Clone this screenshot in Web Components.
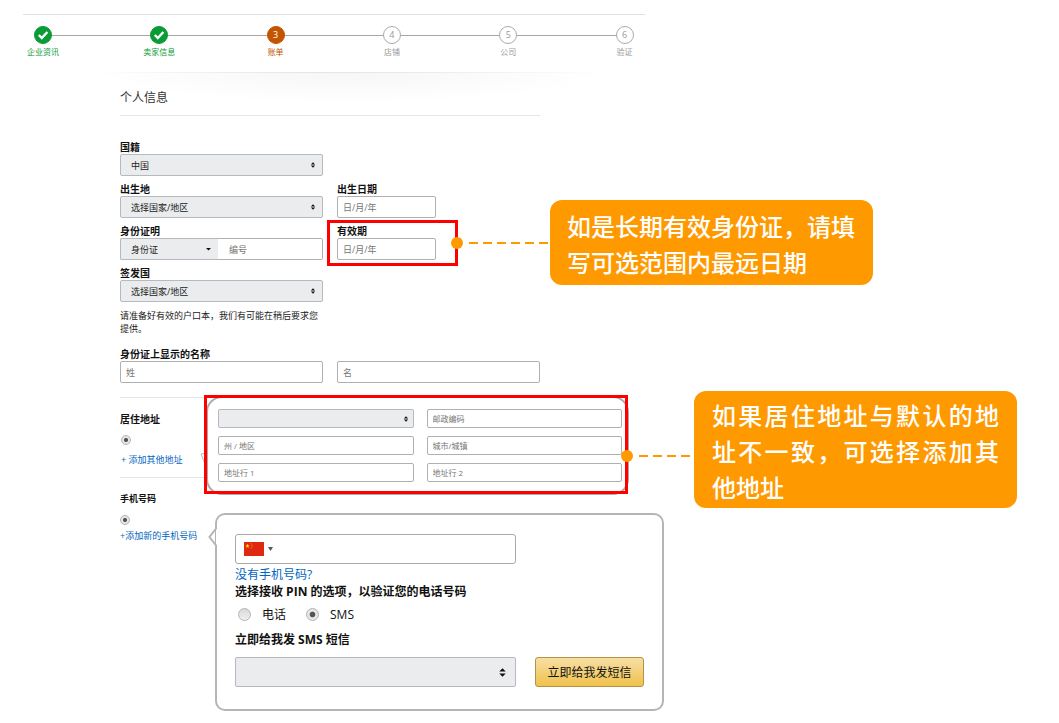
<!DOCTYPE html>
<html lang="zh-CN">
<head>
<meta charset="utf-8">
<meta name="viewport" content="width=device-width, initial-scale=1">
<title>个人信息</title>
<style>
  body { margin: 0; background: #fff; color: #111; font: 9px/13px "Open Sans", "Noto Sans CJK SC", sans-serif; }
</style>
</head>
<body>
<seller-page></seller-page>

<script>
const define = (name, render) => customElements.define(name, class extends HTMLElement {
  connectedCallback() {
    if (this.shadowRoot) return;
    const template = document.createElement('template');
    template.innerHTML = '<style>*{box-sizing:border-box}</style>' + render(this);
    this.attachShadow({ mode: 'open' }).append(template.content.cloneNode(true));
  }
});
const attr = (el, name) => el.getAttribute(name) || '';

/* Progress bar of the registration */
define('step-item', el => `
<style>
  :host { display: grid; justify-items: center; width: 40px; row-gap: 2px; font-size: 10px; line-height: 12px; color: #999; position: relative; }
  .dot { width: 18px; height: 18px; border: 1px solid #aaa; border-radius: 50%; background: #fff; display: grid; place-items: center; font-size: 9px; }
  .label { white-space: nowrap; font-size: 8px; }
  :host([state=done]) { color: #0a9b36; }
  :host([state=done]) .dot { background: #0a9b36; border-color: #0a9b36; }
  :host([state=current]) { color: #c45500; }
  :host([state=current]) .dot { background: #c45500; border-color: #c45500; color: #fff; }
</style>
<span class="dot">${attr(el, 'state') === 'done'
  ? '<svg width="12" height="12" viewBox="0 0 12 12" aria-label="完成"><path d="M1.8 6l3 3L10.4 3" fill="none" stroke="#fff" stroke-width="2.4"/></svg>'
  : attr(el, 'number')}</span>
<span class="label"><slot></slot></span>`);

define('step-bar', () => `
<style>
  :host { display: block; border-top: 1px solid #e0e0e0; padding: 11px 0 14px; }
  .track { display: flex; justify-content: space-between; position: relative; }
  .track::before { content: ""; position: absolute; left: 20px; right: 20px; top: 9px; height: 1px; background: #a6a6a6; }
</style>
<div class="track"><slot></slot></div>`);

define('text-field', el => `
<style>
  :host { display: block; min-width: 0; }
  label { display: block; height: 15px; font-size: 10px; line-height: 16px; font-weight: 700; white-space: nowrap; }
  input { display: block; width: 100%; height: var(--control-height, 22px); margin: 0; padding: 0 5px; border: 1px solid #b0b0b0; border-radius: 2px; background: #fff; font: inherit; color: #111; outline: 0; }
  input::placeholder { color: #767676; opacity: 1; }
  :host([joined]) input { border-left: 0; border-radius: 0 2px 2px 0; padding-left: 11px; }
</style>
${attr(el, 'label') ? `<label for="control">${attr(el, 'label')}</label>` : ''}
<input id="control" type="text" placeholder="${attr(el, 'placeholder')}" aria-label="${attr(el, 'label') || attr(el, 'placeholder')}">`);

define('select-field', el => {
  const size = attr(el, 'arrow') || '6';
  return `
<style>
  :host { display: block; min-width: 0; }
  label { display: block; height: 15px; font-size: 10px; line-height: 16px; font-weight: 700; white-space: nowrap; }
  .box { display: grid; align-items: center; }
  select, svg { grid-area: 1 / 1; }
  select { appearance: none; width: 100%; height: var(--control-height, 22px); margin: 0; padding: 0 20px 0 10px; border: 1px solid #b4bac0; border-radius: 2px; background: #ebecee; font: inherit; color: #222; outline: 0; }
  svg { justify-self: end; margin-right: var(--arrow-inset, 7px); pointer-events: none; }
  :host([joined]) select { border-right: 0; border-radius: 2px 0 0 2px; }
</style>
${attr(el, 'label') ? `<label for="control">${attr(el, 'label')}</label>` : ''}
<div class="box">
  <select id="control" aria-label="${attr(el, 'label') || attr(el, 'name')}"><option>${attr(el, 'value')}</option></select>
  ${el.hasAttribute('joined')
    ? '<svg width="5" height="4" viewBox="0 0 5 4"><path d="M0 1h5L2.500 3.500z" fill="#111"/></svg>'
    : `<svg width="${size}" height="${size}" viewBox="0 0 6 7"><path d="M.5 2.800L3 .2l2.500 2.600zM.5 4.200h5L3 6.800z" fill="#111"/></svg>`}
</div>`;
});

define('id-field', () => `
<style>
  :host { display: block; }
  .label { height: 15px; font-size: 10px; line-height: 16px; font-weight: 700; }
  .pair { display: grid; grid-template-columns: 98fr 105fr; }
</style>
<div class="label">身份证明</div>
<div class="pair" role="group" aria-label="身份证明">
  <select-field joined name="证件类型" value="身份证"></select-field>
  <text-field joined placeholder="编号"></text-field>
</div>`);

define('radio-option', el => `
<style>
  :host { display: block; }
  label { display: flex; align-items: center; gap: var(--radio-gap, 0); }
  input { appearance: none; flex: none; width: var(--radio-size, 10px); height: var(--radio-size, 10px); margin: 0; border: 1px solid #b4b4b4; border-radius: 50%; background: linear-gradient(#d8d8d8, #f0f0f0); }
  input:checked { background: radial-gradient(circle, #555 0 30%, #e6e6e6 42%); }
</style>
<label><input type="radio" name="choice" ${el.hasAttribute('checked') ? 'checked' : ''} aria-label="${attr(el, 'name')}"><slot></slot></label>`);

define('text-link', () => `
<style>
  :host { display: block; }
  a { color: #0066c0; text-decoration: none; white-space: nowrap; }
</style>
<a href="#"><slot></slot></a>`);

/* Orange note, tied by a dashed lead to the edge of the marked area */
define('callout-note', () => `
<style>
  :host { position: absolute; left: 100%; top: 0; z-index: 3; }
  .dot { position: absolute; left: -7px; top: calc(var(--lead-top) - 6px); width: 12px; height: 12px; border-radius: 50%; background: #f90; }
  .lead { position: absolute; left: 11px; top: calc(var(--lead-top) - 1px); width: calc(var(--lead) - 12px); height: 2px; background: repeating-linear-gradient(90deg, #f90 0 9px, transparent 9px 14px); }
  .note { position: absolute; left: var(--lead); top: var(--note-top); width: 323px; padding: var(--note-padding, 8px 18px 5px 17px); border-radius: 12px; background: #f90; color: #fff; font: 500 24px/36px "Noto Sans CJK SC", sans-serif; text-align: justify; }
</style>
<span class="dot"></span><span class="lead"></span>
<div class="note"><slot></slot></div>`);

define('expiry-field', () => `
<style>
  :host { display: block; position: relative; }
  .mark { position: absolute; left: -10px; top: -3px; width: 131px; height: 46px; border: 3px solid #f00; pointer-events: none; }
  .anchor { position: absolute; left: -10px; top: -3px; width: 131px; }
  text-field { width: 99px; }
  callout-note { --lead: 92px; --lead-top: 23px; --note-top: -20px; }
</style>
<text-field label="有效期" placeholder="日/月/年"></text-field>
<div class="mark"></div>
<div class="anchor"><callout-note>如是长期有效身份证，请填写可选范围内最远日期</callout-note></div>`);

define('address-card', () => `
<style>
  :host { display: block; position: relative; max-width: 424px; }
  .bubble { position: absolute; inset: 1px -1px -1px 2px; border: 2px solid #aaa; border-radius: 16px; }
  .pointer { position: absolute; left: -4px; top: 56px; }
  .mark { position: relative; border: 3px solid #f00; padding: 11px 3px 9px 11px; display: grid; grid-template-columns: 1fr 1fr; gap: 8px 13px; --control-height: 19px; --arrow-inset: 5px; font-size: 8px; }
  callout-note { --lead: 66px; --lead-top: 61px; --note-top: -4px; --note-padding: 6px 18px 3px; }
</style>
<div class="bubble"></div>
<svg class="pointer" width="8" height="18" viewBox="0 0 8 18"><path d="M7 2L1 3l4 10" fill="none" stroke="#bbb"/></svg>
<div class="mark">
  <select-field name="国家/地区" value=""></select-field><text-field placeholder="邮政编码"></text-field>
  <text-field placeholder="州 / 地区"></text-field><text-field placeholder="城市/城镇"></text-field>
  <text-field placeholder="地址行 1"></text-field><text-field placeholder="地址行 2"></text-field>
</div>
<callout-note>如果居住地址与默认的地址不一致，可选择添加其他地址</callout-note>`);

define('phone-card', () => `
<style>
  :host { display: block; position: relative; max-width: 449px; border: 2px solid #b5b5b5; border-radius: 10px; padding: 19px 18px 22px; background: #fff; font-size: 12px; line-height: 17px; }
  .pointer { position: absolute; left: -9px; top: 11px; }
  .number { display: flex; align-items: center; gap: 5px; max-width: 281px; height: 30px; margin-bottom: 2px; padding: 0 8px; border: 1px solid #aaa; border-radius: 3px; }
  .number input { flex: 1; min-width: 0; border: 0; padding: 0; outline: 0; font: inherit; background: none; }
  .code { display: flex; align-items: center; gap: 4px; border: 0; padding: 0; background: none; }
  h3 { margin: 0; font-size: 12px; line-height: 17px; font-weight: 700; white-space: nowrap; }
  .radios { display: flex; gap: 20px; margin: 6px 0 8px; padding-left: 3px; --radio-size: 13px; --radio-gap: 11px; }
  .send { display: grid; grid-template-columns: 281fr 109fr; gap: 19px; margin-top: 9px; --control-height: 30px; --arrow-inset: 9px; }
  .send button { height: 30px; padding: 0; border: 1px solid #b29443; border-radius: 3px; background: linear-gradient(#f7dfa5, #f0c14b); font: inherit; color: #111; white-space: nowrap; }
</style>
<svg class="pointer" width="10" height="22" viewBox="0 0 10 22"><path d="M8 2h2v18H8z" fill="#fff"/><path d="M8.500 2L1.500 11l7 9" fill="none" stroke="#b5b5b5" stroke-width="2"/></svg>
<div class="number">
  <button class="code" type="button" aria-label="中国">
    <svg width="20" height="14" viewBox="0 0 20 14"><path d="M0 0h20v14H0z" fill="#de2910"/><path d="M3.500 1.800l.6 1.500h1.600l-1.300 1 .5 1.600-1.400-1-1.400 1 .5-1.600-1.300-1h1.600z" fill="#ffde00"/><g fill="#f5a800"><circle cx="7" cy="1.700" r=".5"/><circle cx="8" cy="3" r=".5"/><circle cx="8" cy="4.700" r=".5"/><circle cx="7" cy="6" r=".5"/></g></svg>
    <svg width="5" height="4" viewBox="0 0 5 4"><path d="M0 0h5L2.500 4z" fill="#555"/></svg>
  </button>
  <input type="tel" aria-label="手机号码">
</div>
<text-link>没有手机号码?</text-link>
<h3>选择接收 PIN 的选项，以验证您的电话号码</h3>
<div class="radios"><radio-option name="电话">电话</radio-option><radio-option name="SMS" checked>SMS</radio-option></div>
<h3>立即给我发 SMS 短信</h3>
<div class="send"><select-field name="短信语言" value="" arrow="9"></select-field><button type="button">立即给我发短信</button></div>`);

define('side-option', el => `
<style>
  :host { display: block; border-top: 1px solid #e4e4e4; padding: 14px 0 10px; }
  h3 { margin: 0 0 9px; font-size: var(--title-size, 10px); line-height: 14px; font-weight: 700; }
  radio-option, text-link { margin-left: var(--option-indent, 1px); }
  text-link { line-height: 14px; margin-top: var(--link-gap, 8px); }
</style>
<h3>${attr(el, 'label')}</h3>
<radio-option checked name="${attr(el, 'label')}"></radio-option>
<text-link><slot></slot></text-link>`);

define('seller-page', () => `
<style>
  :host { display: block; padding-top: 14px; }
  header { display: grid; grid-template-columns: 3fr 2fr; margin-left: 23px; }
  main { position: relative; padding-left: 120px; }
  .shade { position: absolute; left: 9%; width: 48%; top: 0; height: 30px; background: linear-gradient(90deg, transparent, #e4e4e4 45%, transparent) top / 100% 1px no-repeat, radial-gradient(ellipse 50% 100% at 50% 0, #f6f6f6, #fff0); }
  h1 { position: relative; max-width: 420px; margin: 0 0 23px; padding: 17px 0 8px; border-bottom: 1px solid #e7e7e7; font-size: 12px; line-height: 18px; font-weight: 400; color: #333; }
  .form { display: grid; grid-template-columns: 1fr 1fr; gap: 5px 14px; max-width: 420px; }
  .first { grid-column: 1; }
  .last { align-self: end; }
  .birth { width: 99px; }
  p { grid-column: 1; margin: 2px 0 6px; line-height: 13px; color: #222; }
  .lower { display: grid; grid-template-columns: 84px minmax(0, 460px); margin-top: 12px; padding-bottom: 12px; }
  .side { padding-top: 2px; }
  .phone { --title-size: 9px; --link-gap: 4px; --option-indent: 0; }
  .cards { display: grid; gap: 19px; }
  phone-card { margin-left: 11px; z-index: 1; }
</style>
<header>
  <step-bar>
    <step-item state="done">企业资讯</step-item>
    <step-item state="done">卖家信息</step-item>
    <step-item state="current" number="3">账单</step-item>
    <step-item number="4">店铺</step-item>
    <step-item number="5">公司</step-item>
    <step-item number="6">验证</step-item>
  </step-bar>
</header>
<main>
  <div class="shade"></div>
  <h1>个人信息</h1>
  <div class="form">
    <select-field class="first" label="国籍" value="中国"></select-field>
    <select-field class="first" label="出生地" value="选择国家/地区"></select-field>
    <text-field class="birth" label="出生日期" placeholder="日/月/年"></text-field>
    <id-field></id-field>
    <expiry-field></expiry-field>
    <select-field class="first" label="签发国" value="选择国家/地区"></select-field>
    <p>请准备好有效的户口本，我们有可能在稍后要求您提供。</p>
    <text-field class="first" label="身份证上显示的名称" placeholder="姓"></text-field>
    <text-field class="last" placeholder="名"></text-field>
  </div>
  <div class="lower">
    <div class="side">
      <side-option label="居住地址">+ 添加其他地址</side-option>
      <side-option class="phone" label="手机号码">+添加新的手机号码</side-option>
    </div>
    <div class="cards">
      <address-card></address-card>
      <phone-card></phone-card>
    </div>
  </div>
</main>`);
</script>
</body>
</html>
